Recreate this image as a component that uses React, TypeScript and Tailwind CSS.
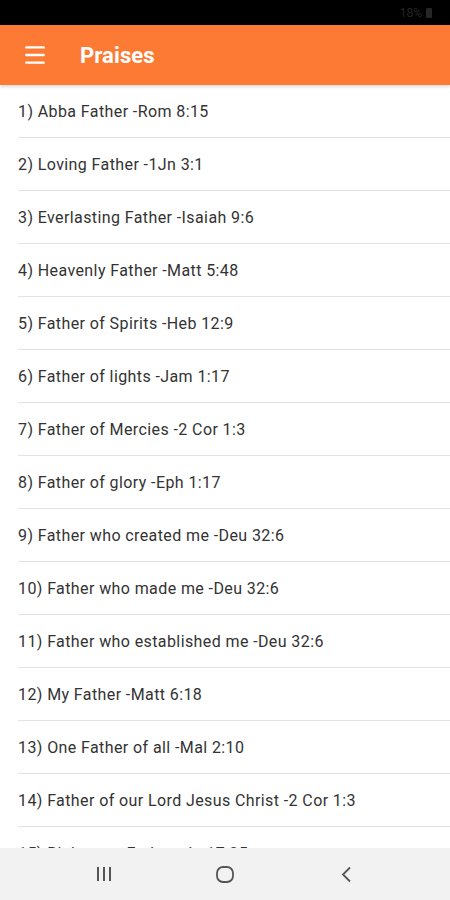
import { Menu } from "lucide-react";

const praises = [
  "Abba Father -Rom 8:15",
  "Loving Father -1Jn 3:1",
  "Everlasting Father -Isaiah 9:6",
  "Heavenly Father -Matt 5:48",
  "Father of Spirits -Heb 12:9",
  "Father of lights -Jam 1:17",
  "Father of Mercies -2 Cor 1:3",
  "Father of glory -Eph 1:17",
  "Father who created me -Deu 32:6",
  "Father who made me -Deu 32:6",
  "Father who established me -Deu 32:6",
  "My Father -Matt 6:18",
  "One Father of all -Mal 2:10",
  "Father of our Lord Jesus Christ -2 Cor 1:3",
  "Righteous Father -Jn 17:25",
  "Holy Father -Jn 17:11",
];

export default function App() {
  return (
    <div
      className="flex h-[900px] w-[450px] flex-col overflow-hidden bg-white"
      style={{ fontFamily: "Roboto, 'Noto Sans', sans-serif" }}
    >
      {/* status bar */}
      <div className="flex h-[25px] shrink-0 items-center justify-end gap-1 bg-black pr-[18px] text-[12px] text-[#262626]">
        <span>18%</span>
        <span className="h-[10px] w-[6px] rounded-[1px] bg-[#262626]" />
      </div>

      {/* toolbar */}
      <div className="flex h-[60px] shrink-0 items-center bg-[#fd7a35] shadow-[0_2px_3px_rgba(0,0,0,0.15)]">
        <Menu className="ml-[22px] h-[26px] w-[26px] text-white" strokeWidth={2.2} />
        <h1 className="ml-[32px] text-[22px] font-bold tracking-[0.1px] text-white">Praises</h1>
      </div>

      {/* list */}
      <ul className="flex-1 overflow-hidden">
        {praises.map((p, i) => (
          <li
            key={i}
            className="ml-[18px] flex h-[53px] items-center border-b border-[#e2e2e2] pt-[1px] text-[16px] tracking-[0.4px] text-[#333]"
          >
            {i + 1}) {p}
          </li>
        ))}
      </ul>

      {/* nav bar */}
      <div className="grid h-[52px] shrink-0 grid-cols-3 items-center bg-[#f2f2f2] px-[44px] text-[#555]">
        <div className="flex justify-center">
          <svg width="18" height="16" viewBox="0 0 18 16" fill="none" stroke="#555" strokeWidth="2">
            <path d="M3 1v14M9 1v14M15 1v14" />
          </svg>
        </div>
        <div className="flex justify-center">
          <svg width="18" height="17" viewBox="0 0 18 17" fill="none" stroke="#555" strokeWidth="1.8">
            <rect x="1" y="1" width="16" height="15" rx="6" />
          </svg>
        </div>
        <div className="flex justify-center">
          <svg width="12" height="17" viewBox="0 0 12 17" fill="none" stroke="#555" strokeWidth="1.8">
            <path d="M10 1.5L3 8.5l7 7" />
          </svg>
        </div>
      </div>
    </div>
  );
}
